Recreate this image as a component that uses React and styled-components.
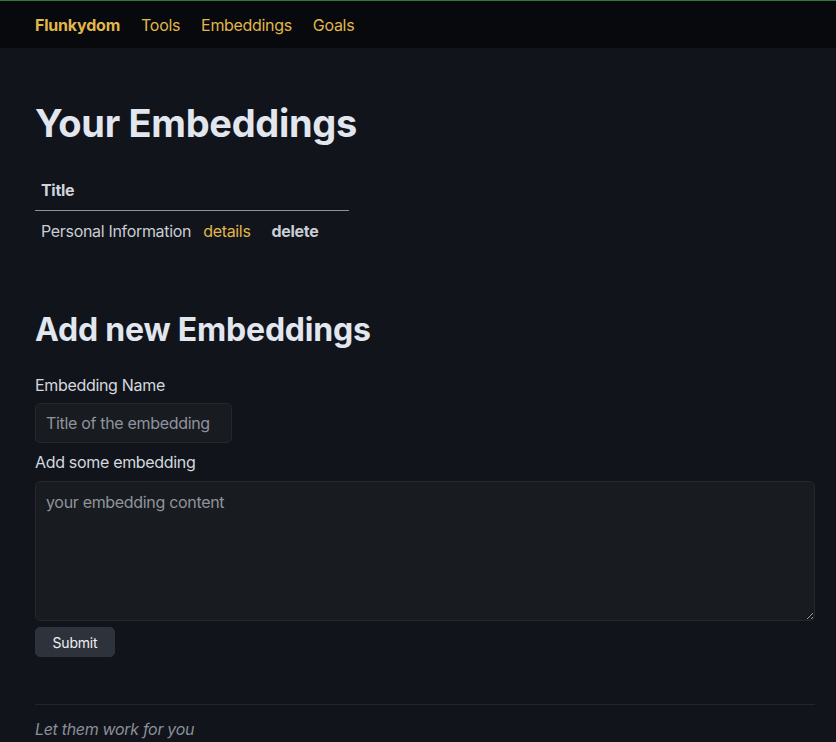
import React from "react";
import styled, { createGlobalStyle } from "styled-components";

const Global = createGlobalStyle`
  html, body { margin: 0; padding: 0; background: #11141a; }
  body { font-family: Inter, "Noto Sans", sans-serif; color: #c9cdd4; font-size: 16px; line-height: 24px; letter-spacing: -0.32px; }
  * { box-sizing: border-box; }
`;

const Page = styled.div`
  min-height: 742px;
  background: #11141a;
  border-top: 1px solid #2f7a3a;
`;

const Nav = styled.nav`
  height: 47px;
  background: #07090d;
  display: flex;
  align-items: center;
  gap: 21px;
  padding: 0 35px;
`;

const NavLink = styled.a`
  color: #e1b64c;
  font-size: 16px;
  font-weight: ${(p) => (p.$brand ? 700 : 400)};
  letter-spacing: ${(p) => (p.$brand ? "-0.2px" : "-0.32px")};
  text-decoration: none;
  cursor: pointer;
`;

const Main = styled.main`
  padding: 53px 21px 0 35px;
  display: flex;
  flex-direction: column;
`;

const H1 = styled.h1`
  margin: 0;
  font-size: 38px;
  line-height: 44px;
  font-weight: 700;
  color: #e1e6ef;
  letter-spacing: -0.3px;
`;

const H2 = styled.h2`
  margin: 0 0 23px;
  font-size: 32px;
  line-height: 40px;
  font-weight: 700;
  color: #e1e6ef;
  letter-spacing: -0.2px;
`;

const Table = styled.table`
  border-collapse: collapse;
  width: 314px;
  margin-top: 25px;
  margin-bottom: 59px;
`;

const Th = styled.th`
  text-align: left;
  font-weight: 700;
  color: #cfd3da;
  padding: 8px 6px 8px 6px;
  border-bottom: 1px solid #8b9099;
`;

const Td = styled.td`
  padding: 8px 6px;
  white-space: nowrap;
  color: ${(p) => (p.$link ? "#e1b64c" : "#c9cdd4")};
  font-weight: ${(p) => (p.$bold ? 700 : 400)};
  padding-left: ${(p) => p.$pl || "6px"};
  width: ${(p) => p.$w || "auto"};
`;

const Label = styled.label`
  display: block;
  font-size: 16px;
  line-height: 24px;
  color: #d4d8df;
  margin-bottom: ${(p) => p.$mb || "6px"};
`;

const Input = styled.input`
  display: block;
  width: 197px;
  height: 40px;
  background: #181b20;
  border: 1px solid #24272d;
  border-radius: 5px;
  padding: 0 10px;
  font: inherit;
  font-size: 16px;
  letter-spacing: -0.32px;
  color: #c9cdd4;
  margin-bottom: 7px;
  outline: none;
  &::placeholder { color: #8f949c; }
`;

const TextArea = styled.textarea`
  display: block;
  width: 100%;
  height: 140px;
  background: #181b20;
  border: 1px solid #24272d;
  border-radius: 5px;
  padding: 8px 10px;
  font: inherit;
  font-size: 16px;
  line-height: 24px;
  letter-spacing: -0.32px;
  color: #c9cdd4;
  margin: 0 0 6px;
  outline: none;
  resize: vertical;
  &::placeholder { color: #8f949c; }
`;

const Button = styled.button`
  align-self: flex-start;
  width: 80px;
  height: 30px;
  background: #2e323a;
  border: 1px solid #2e323a;
  border-radius: 5px;
  color: #eef0f3;
  font-family: Inter, "Noto Sans", sans-serif;
  font-size: 14px;
  letter-spacing: -0.2px;
  cursor: pointer;
`;

const Footer = styled.footer`
  margin-top: 47px;
  border-top: 1px solid #22252b;
  padding-top: 12px;
  font-style: italic;
  color: #8a8f98;
  font-size: 16px;
`;

export default function App() {
  return (
    <>
      <Global />
      <Page>
        <Nav>
          <NavLink $brand>Flunkydom</NavLink>
          <NavLink>Tools</NavLink>
          <NavLink>Embeddings</NavLink>
          <NavLink>Goals</NavLink>
        </Nav>
        <Main>
          <H1>Your Embeddings</H1>
          <Table>
            <thead>
              <tr>
                <Th colSpan={3}>Title</Th>
              </tr>
            </thead>
            <tbody>
              <tr>
                <Td>Personal Information</Td>
                <Td $link>details</Td>
                <Td $bold $pl="15px" $w="100%">delete</Td>
              </tr>
            </tbody>
          </Table>
          <H2>Add new Embeddings</H2>
          <Label>Embedding Name</Label>
          <Input placeholder="Title of the embedding" />
          <Label $mb="7px">Add some embedding</Label>
          <TextArea placeholder="your embedding content" />
          <Button>Submit</Button>
          <Footer>Let them work for you</Footer>
        </Main>
      </Page>
    </>
  );
}
